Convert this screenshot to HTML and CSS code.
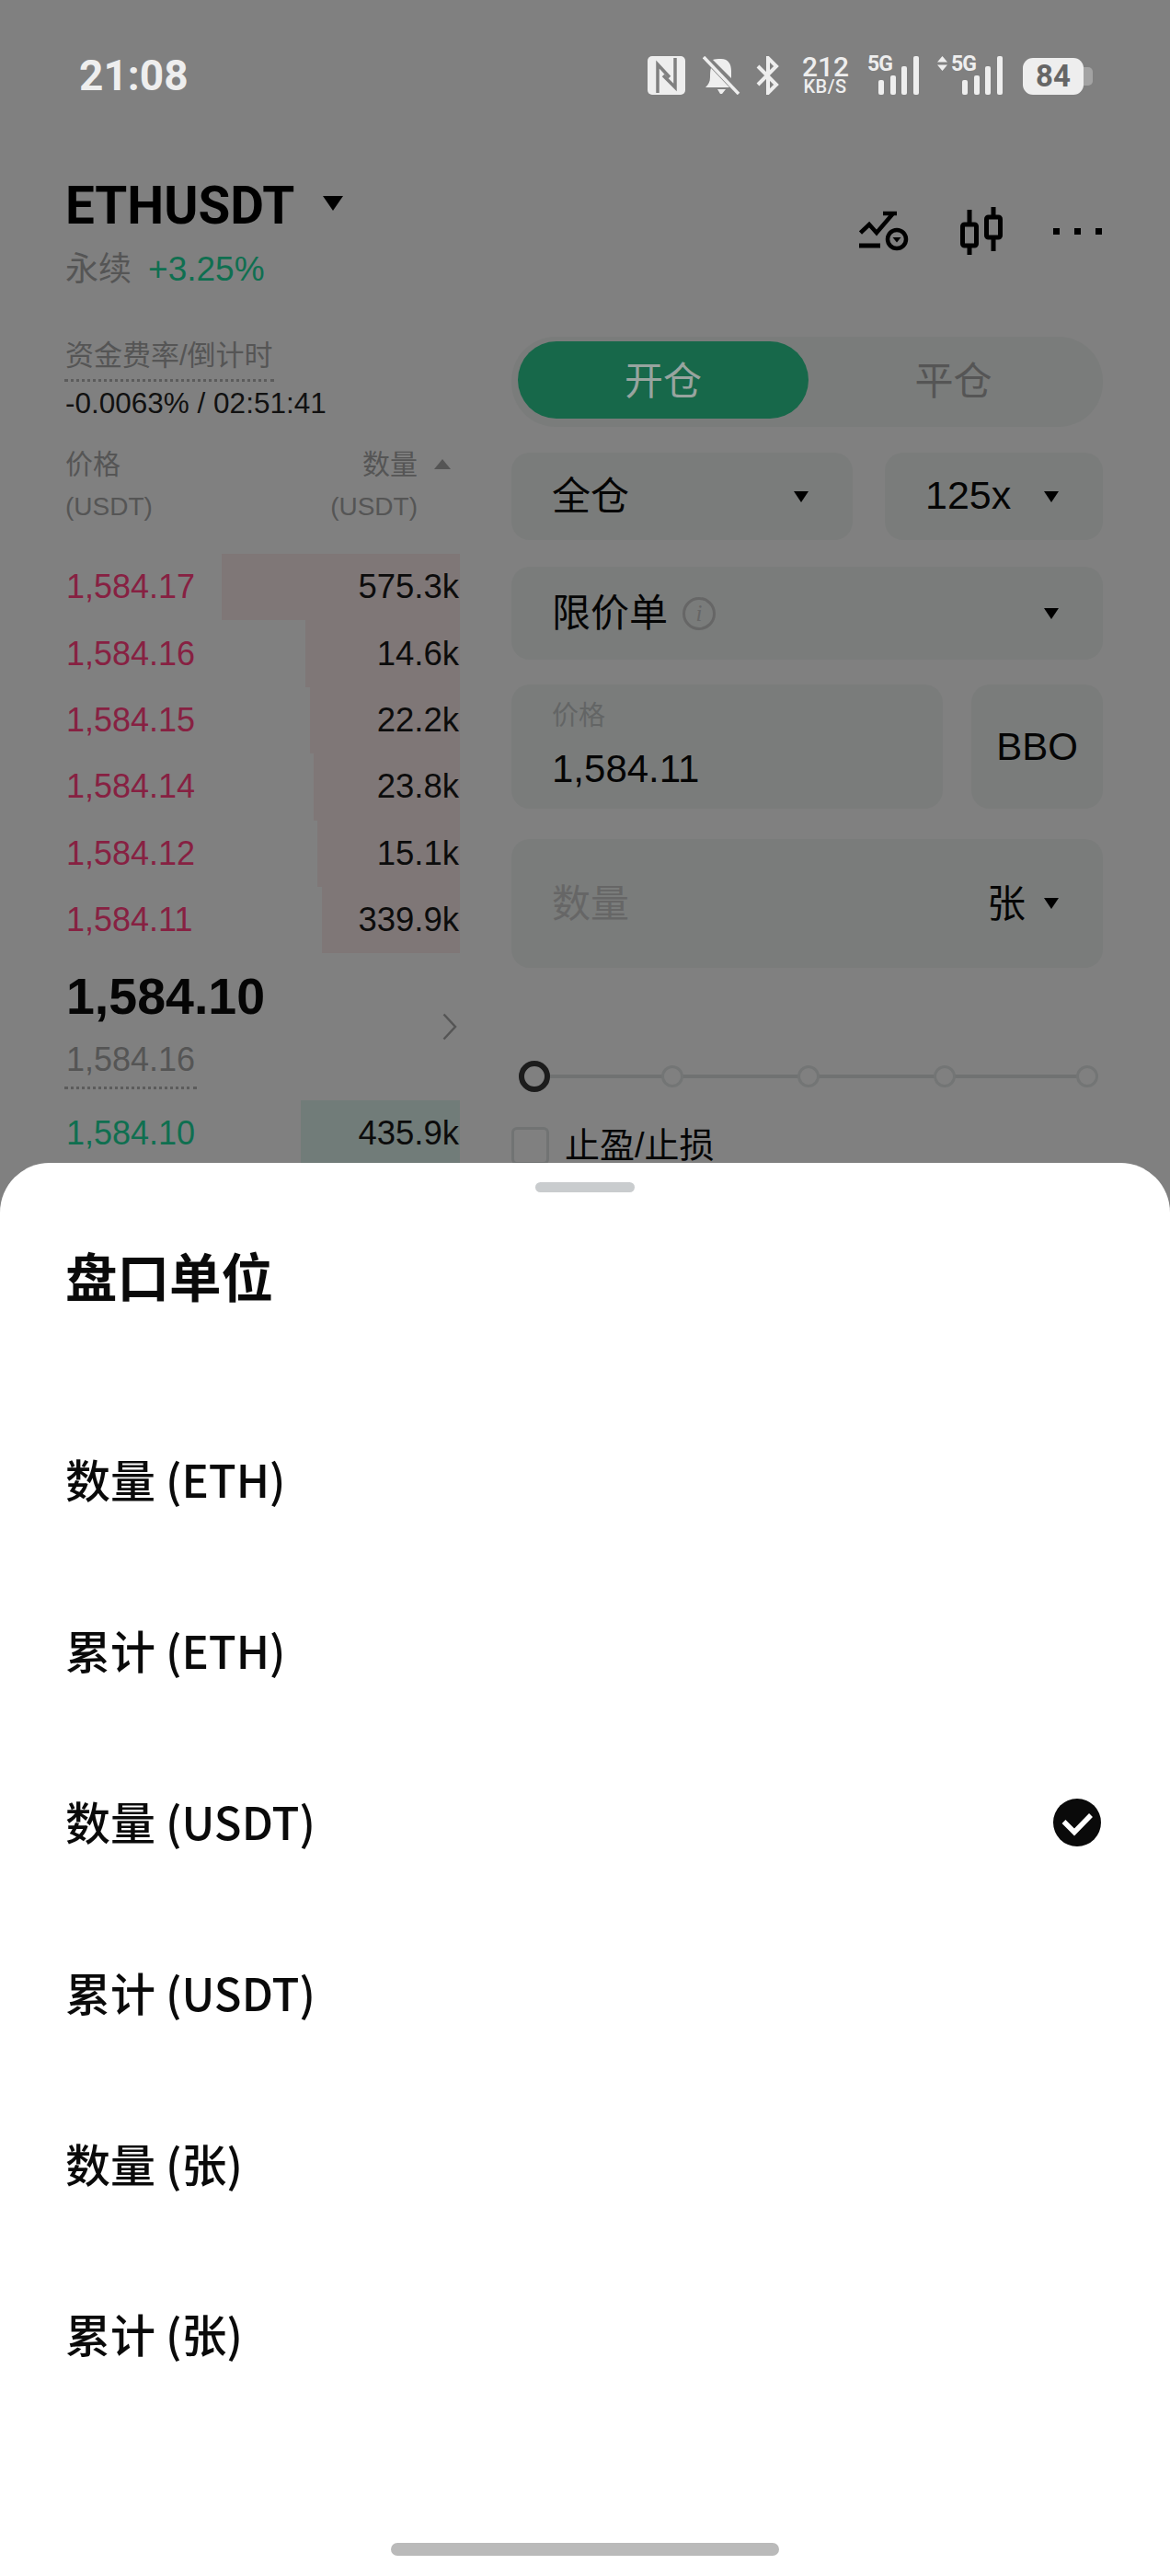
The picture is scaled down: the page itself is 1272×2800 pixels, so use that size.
FILE: index.html
```html
<!DOCTYPE html>
<html lang="zh-CN">
<head>
  <meta charset="UTF-8">
  <meta name="viewport" content="width=device-width, initial-scale=1.0">
  <title>ETHUSDT 盘口单位</title>
  <link rel="stylesheet" href="styles.css">
</head>
<body>
  <div class="app">
    <!-- status bar -->
    <div class="status">
      <span class="time">21:08</span>
      <div class="status-icons">
        <svg class="ico-nfc" width="41" height="42" viewBox="0 0 41 42">
          <rect width="41" height="42" rx="5" fill="#eee"/>
          <path d="M11 40V9l13 14M30 2v32L17 21" fill="none" stroke="#808080" stroke-width="3.5"/>
        </svg>
        <svg class="ico-bell" width="41" height="42" viewBox="0 0 41 42">
          <path d="M20 3c8 0 11 6 11 13v8l-20-20c2-1 5-1 9-1zM9 13l20 21H3c3-3 5-6 5-11 0-4 0-7 1-10zM16 36h9l-4 5h-2z" fill="#eee"/>
          <path d="M1 1l38 40" stroke="#eee" stroke-width="3.5"/>
        </svg>
        <svg class="ico-bt" width="27" height="42" viewBox="0 0 27 42">
          <path d="M3 11l20 20-9 9V2l9 9L3 31" fill="none" stroke="#eee" stroke-width="4"/>
        </svg>
        <div class="speed"><b>212</b><small>KB/S</small></div>
        <div class="signal">
          <span class="net">5G</span>
          <i class="bar b1"></i><i class="bar b2"></i><i class="bar b3"></i><i class="bar b4"></i>
        </div>
        <div class="signal signal-data">
          <svg width="11" height="16" viewBox="0 0 11 16"><path d="M5.5 0L11 6.500H0zM0 9.500h11L5.500 16z" fill="#eee"/></svg>
          <span class="net">5G</span>
          <i class="bar b1"></i><i class="bar b2"></i><i class="bar b3"></i><i class="bar b4"></i>
        </div>
        <div class="battery"><span class="battery-body">84</span><i class="battery-tip"></i></div>
      </div>
    </div>

    <!-- symbol header -->
    <div class="topbar">
      <div>
        <div class="symbol"><span>ETHUSDT</span><i class="caret caret-lg"></i></div>
        <div class="sub"><span class="muted">永续</span> <span class="up change">+3.25%</span></div>
      </div>
      <div class="actions">
        <svg width="54" height="44" viewBox="0 0 54 44" fill="none" stroke="#000">
          <path d="M1.500 24L11 15l8 9L37 3M26 3h15" stroke-width="4.500"/>
          <path d="M0 38h23" stroke-width="5"/>
          <circle cx="41" cy="31" r="10" stroke-width="4.500"/>
          <path d="M36.500 29h9L41 34.500z" fill="#000" stroke="none"/>
        </svg>
        <svg width="46" height="52" viewBox="0 0 46 52" fill="none" stroke="#000" stroke-width="5">
          <rect x="2.500" y="19" width="15" height="23" rx="2"/>
          <path d="M10 3v16M10 42v10"/>
          <rect x="28.500" y="11" width="15" height="22" rx="2"/>
          <path d="M36 0v11M36 33v15"/>
        </svg>
        <div class="dots"><i></i><i></i><i></i></div>
      </div>
    </div>

    <div class="market">
      <!-- order book -->
      <div class="book">
        <div class="funding-label muted">资金费率/倒计时</div>
        <div class="funding">-0.0063% / 02:51:41</div>
        <div class="book-head muted">
          <div><div>价格</div><div class="unit">(USDT)</div></div>
          <div class="head-right">
            <div class="head-qty"><div>数量</div><div class="unit">(USDT)</div></div>
            <i class="caret-up"></i>
          </div>
        </div>
        <div class="row"><i class="depth ask" style="width:259px"></i><span class="down">1,584.17</span><span class="qty">575.3k</span></div>
        <div class="row"><i class="depth ask" style="width:168px"></i><span class="down">1,584.16</span><span class="qty">14.6k</span></div>
        <div class="row"><i class="depth ask" style="width:163px"></i><span class="down">1,584.15</span><span class="qty">22.2k</span></div>
        <div class="row"><i class="depth ask" style="width:159px"></i><span class="down">1,584.14</span><span class="qty">23.8k</span></div>
        <div class="row"><i class="depth ask" style="width:155px"></i><span class="down">1,584.12</span><span class="qty">15.1k</span></div>
        <div class="row"><i class="depth ask" style="width:150px"></i><span class="down">1,584.11</span><span class="qty">339.9k</span></div>
        <div class="mid">
          <div>
            <div class="last">1,584.10</div>
            <div class="mark muted">1,584.16</div>
          </div>
          <svg class="chevron" width="16" height="30" viewBox="0 0 16 30"><path d="M1.500 1.500L14 15 1.500 28.500" fill="none" stroke="#555" stroke-width="2.500"/></svg>
        </div>
        <div class="row"><i class="depth bid" style="width:173px"></i><span class="up">1,584.10</span><span class="qty">435.9k</span></div>
      </div>

      <!-- order form -->
      <div class="form">
        <div class="tabs">
          <div class="tab tab-on">开仓</div>
          <div class="tab">平仓</div>
        </div>
        <div class="form-row row-margin">
          <div class="field field-cross"><span class="cjk">全仓</span><i class="caret"></i></div>
          <div class="field field-lev"><span class="lev">125x</span><i class="caret"></i></div>
        </div>
        <div class="field field-type">
          <span class="type-label"><span class="cjk">限价单</span><i class="info">i</i></span>
          <i class="caret"></i>
        </div>
        <div class="form-row row-price">
          <div class="field-price">
            <div class="price-label">价格</div>
            <div class="price-value">1,584.11</div>
          </div>
          <div class="bbo">BBO</div>
        </div>
        <div class="field field-amount">
          <span class="placeholder cjk">数量</span>
          <span class="amount-unit"><span class="cjk">张</span><i class="caret"></i></span>
        </div>
        <div class="slider">
          <i class="knob knob-on"></i><i class="knob"></i><i class="knob"></i><i class="knob"></i><i class="knob"></i>
        </div>
        <div class="tpsl"><i class="check-box"></i><span>止盈/止损</span></div>
      </div>
    </div>
  </div>

  <!-- bottom sheet -->
  <div class="sheet">
    <div class="handle"></div>
    <div class="sheet-title">盘口单位</div>
    <ul class="options">
      <li><span>数量 (ETH)</span></li>
      <li><span>累计 (ETH)</span></li>
      <li><span>数量 (USDT)</span>
        <svg width="52" height="52" viewBox="0 0 52 52">
          <circle cx="26" cy="26" r="26" fill="#0a0a0a"/>
          <path d="M11.500 25l11.500 11.500L41 18" fill="none" stroke="#fff" stroke-width="5.500"/>
        </svg>
      </li>
      <li><span>累计 (USDT)</span></li>
      <li><span>数量 (张)</span></li>
      <li><span>累计 (张)</span></li>
    </ul>
    <div class="home-bar"></div>
  </div>
</body>
</html>
```

FILE: styles.css
```css
* {
  box-sizing: border-box;
}

html, body {
  margin: 0;
  padding: 0;
}

body {
  width: 1272px;
  height: 2800px;
  overflow: hidden;
  background-color: #808080;
  color: #0a0a0a;
  font-family: "Liberation Sans", "Noto Sans CJK SC", sans-serif;
}

i {
  display: block;
  font-style: normal;
}

.app {
  height: 1264px;
  overflow: hidden;
}

/* status bar */
.status {
  height: 103px;
  padding: 61px 84px 0 86px;
  display: flex;
  justify-content: space-between;
  color: #eee;
}

.time {
  font-family: Roboto, sans-serif;
  font-weight: 700;
  font-size: 46px;
  line-height: 42px;
}

.status-icons {
  display: flex;
  height: 42px;
}

.ico-bell {
  margin-left: 19px;
}

.ico-bt {
  margin-left: 16px;
}

.speed {
  margin-left: 24px;
  width: 50px;
  text-align: center;
  font-family: Roboto, sans-serif;
}

.speed b {
  display: block;
  font-weight: 500;
  font-size: 30px;
  line-height: 24px;
}

.speed small {
  display: block;
  font-weight: 500;
  font-size: 20px;
  line-height: 18px;
  letter-spacing: 0.500px;
  white-space: nowrap;
}

.signal {
  margin-left: 21px;
  width: 56px;
  padding-left: 12px;
  display: flex;
  align-items: flex-end;
  justify-content: space-between;
  position: relative;
}

.signal-data {
  margin-left: 20px;
  width: 71px;
  padding-left: 27px;
}

.signal svg {
  position: absolute;
  left: 0;
  top: 0;
}

.net {
  position: absolute;
  left: 0;
  top: 0;
  font-family: Roboto, sans-serif;
  font-weight: 700;
  font-size: 23px;
  line-height: 17px;
  letter-spacing: -1px;
}

.signal-data .net {
  left: 15px;
}

.bar {
  width: 6px;
  background-color: #eee;
  border-radius: 2px;
}

.bar.b1 {
  height: 16px;
}

.bar.b2 {
  height: 21px;
}

.bar.b3 {
  height: 31px;
}

.bar.b4 {
  height: 42px;
}

.battery {
  margin-left: 22px;
  margin-top: 2px;
  display: flex;
  align-items: center;
}

.battery-body {
  width: 66px;
  height: 40px;
  border-radius: 11px;
  background-color: #eee;
  color: #666;
  font-family: Roboto, sans-serif;
  font-weight: 700;
  font-size: 33px;
  line-height: 40px;
  text-align: center;
}

.battery-tip {
  width: 10px;
  height: 20px;
  background-color: #a3a3a3;
  border-radius: 0 5px 5px 0;
}

/* header */
.topbar {
  margin-top: 85px;
  padding: 0 74px 0 71px;
  display: flex;
  justify-content: space-between;
}

.symbol {
  display: flex;
  align-items: center;
  height: 72px;
  font-family: Roboto, sans-serif;
  font-weight: 700;
  font-size: 56.500px;
  color: #000;
}

.caret-lg {
  margin-left: 31px;
  margin-top: -6px;
  border-width: 16px 11px 0 !important;
}

.sub {
  margin-top: 11px;
  font-size: 36px;
  line-height: 44px;
}

.change {
  font-size: 37px;
  margin-left: 8px;
}

.muted {
  color: #555;
}

.up {
  color: #0f6f50;
}

.down {
  color: #872142;
}

.actions {
  display: flex;
  align-items: center;
  gap: 55px;
  margin-top: 37px;
  height: 52px;
}

.dots {
  display: flex;
  gap: 16px;
}

.dots i {
  width: 7px;
  height: 7px;
  background-color: #000;
}

.actions svg + svg {
  margin-left: 1px;
}

.caret {
  width: 0;
  height: 0;
  border-style: solid;
  border-width: 12px 8px 0;
  border-color: #000 transparent transparent;
}

/* market layout */
.market {
  margin-top: 50px;
  padding-left: 72px;
  display: flex;
  gap: 56px;
}

.book {
  width: 428px;
  flex: none;
}

.funding-label {
  display: inline-block;
  margin-left: -2px;
  padding: 0 1px 3px;
  font-size: 31px;
  line-height: 44px;
  border-bottom: 3px dotted #5c5c5c;
  vertical-align: top;
}

.funding {
  margin: 3px 0 0 -1px;
  font-size: 31.500px;
  line-height: 40px;
  color: #111;
}

.book-head {
  margin: 24px 0 28px -1px;
  display: flex;
  justify-content: space-between;
  font-size: 30px;
  line-height: 46px;
}

.unit {
  font-size: 28px;
}

.head-right {
  display: flex;
  gap: 18px;
  padding-right: 10px;
}

.head-qty {
  text-align: right;
}

.caret-up {
  width: 0;
  height: 0;
  margin-top: 17px;
  border-style: solid;
  border-width: 0 9px 11px;
  border-color: transparent transparent #555;
}

.row {
  position: relative;
  height: 72.400px;
  display: flex;
  justify-content: space-between;
  align-items: center;
  font-size: 36px;
}

.row span {
  position: relative;
}

.qty {
  margin-right: 1px;
  font-size: 36.500px;
  color: #0c0c0c;
}

.depth {
  position: absolute;
  right: 0;
  top: 0;
  bottom: 0;
}

.depth.ask {
  background-color: #7f7777;
}

.depth.bid {
  background-color: #717c79;
}

.mid {
  margin-top: 11.600px;
  margin-bottom: 12px;
  display: flex;
  justify-content: space-between;
  align-items: flex-start;
}

.last {
  font-weight: 700;
  font-size: 55.500px;
  line-height: 70px;
  color: #050505;
}

.mark {
  display: inline-block;
  margin-left: -2px;
  padding: 12px 2px 7px 2px;
  font-size: 36px;
  line-height: 44px;
  border-bottom: 3px dotted #5c5c5c;
}

.chevron {
  margin-top: 53px;
  margin-right: 3px;
}

/* order form */
.form {
  width: 643px;
  flex: none;
  font-size: 42px;
  color: #050505;
}

.cjk {
  padding-bottom: 8px;
}

.tabs {
  margin-top: 1px;
  height: 98px;
  padding: 5px 0 0 7px;
  display: flex;
  background-color: #7a7c7b;
  border-radius: 48px;
}

.tab {
  flex: 1;
  height: 84px;
  line-height: 88px;
  text-align: center;
  color: #555;
}

.tab-on {
  flex: none;
  width: 316px;
  border-radius: 42px;
  background-color: #17684a;
  color: #98a49f;
}

.tab + .tab {
  padding-right: 5px;
}

.form-row {
  display: flex;
}

.row-margin {
  margin-top: 28px;
  gap: 35px;
}

.field {
  display: flex;
  justify-content: space-between;
  align-items: center;
  padding: 0 48px 0 44px;
  background-color: #7a7c7b;
  border-radius: 20px;
}

.field-cross {
  width: 371px;
  height: 95px;
}

.field-lev {
  width: 237px;
  height: 95px;
}

.lev {
  font-size: 43px;
  padding-bottom: 2px;
}

.field-type {
  margin-top: 29px;
  height: 101px;
}

.type-label {
  display: flex;
  align-items: center;
  gap: 16px;
}

.info {
  width: 36px;
  height: 36px;
  border: 3px solid #666;
  border-radius: 50%;
  color: #666;
  font-family: "Liberation Serif", serif;
  font-style: italic;
  font-size: 25px;
  line-height: 30px;
  text-align: center;
}

.row-price {
  margin-top: 27px;
  gap: 31px;
}

.field-price {
  width: 469px;
  height: 135px;
  padding: 16px 0 0 44px;
  background-color: #7a7c7b;
  border-radius: 20px;
}

.price-label {
  font-size: 29px;
  line-height: 36px;
  color: #636565;
}

.price-value {
  margin-top: 18px;
  line-height: 44px;
}

.bbo {
  width: 143px;
  height: 135px;
  line-height: 135px;
  text-align: center;
  font-size: 42px;
  background-color: #7a7c7b;
  border-radius: 20px;
}

.field-amount {
  margin-top: 33px;
  height: 140px;
}

.placeholder {
  color: #666;
}

.amount-unit {
  display: flex;
  align-items: center;
  gap: 20px;
}

.slider {
  margin: 101px 0 0 8px;
  width: 629px;
  height: 34px;
  display: flex;
  align-items: center;
  background: linear-gradient(#707272, #707272) center / 100% 4px no-repeat;
}

.knob {
  width: 24px;
  height: 24px;
  flex: none;
  margin-left: 124px;
  background-color: #808080;
  border: 3px solid #737575;
  border-radius: 50%;
}

.knob-on {
  width: 34px;
  height: 34px;
  margin-left: 0;
  border: 6px solid #1c1c1c;
}

.knob-on + .knob {
  margin-left: 121px;
}

.knob:last-child {
  margin-left: 131px;
}

.tpsl {
  margin-top: 38px;
  display: flex;
  align-items: center;
  gap: 17px;
  font-size: 38px;
  height: 41px;
}

.tpsl span {
  padding-bottom: 8px;
}

.check-box {
  width: 41px;
  height: 41px;
  border: 3px solid #717373;
  border-radius: 6px;
}

/* bottom sheet */
.sheet {
  height: 1536px;
  display: flex;
  flex-direction: column;
  background-color: #fff;
  border-radius: 54px 54px 0 0;
  font-family: "Noto Sans CJK SC", sans-serif;
}

.handle {
  width: 108px;
  height: 11px;
  margin: 21px auto 0;
  flex: none;
  background-color: #c9ccce;
  border-radius: 6px;
}

.sheet-title {
  margin-top: 54px;
  padding-left: 71px;
  font-weight: 700;
  font-size: 56.500px;
  line-height: 70px;
}

.options {
  list-style: none;
  margin: 97px 0 0;
  padding: 0;
}

.options li {
  height: 185.800px;
  padding: 0 75px 0 71px;
  display: flex;
  justify-content: space-between;
  align-items: center;
  font-weight: 500;
  font-size: 49px;
}

.options li span {
  padding-bottom: 6px;
}

.home-bar {
  width: 422px;
  height: 14px;
  margin: auto auto 22px;
  background-color: #bababa;
  border-radius: 7px;
}
```
